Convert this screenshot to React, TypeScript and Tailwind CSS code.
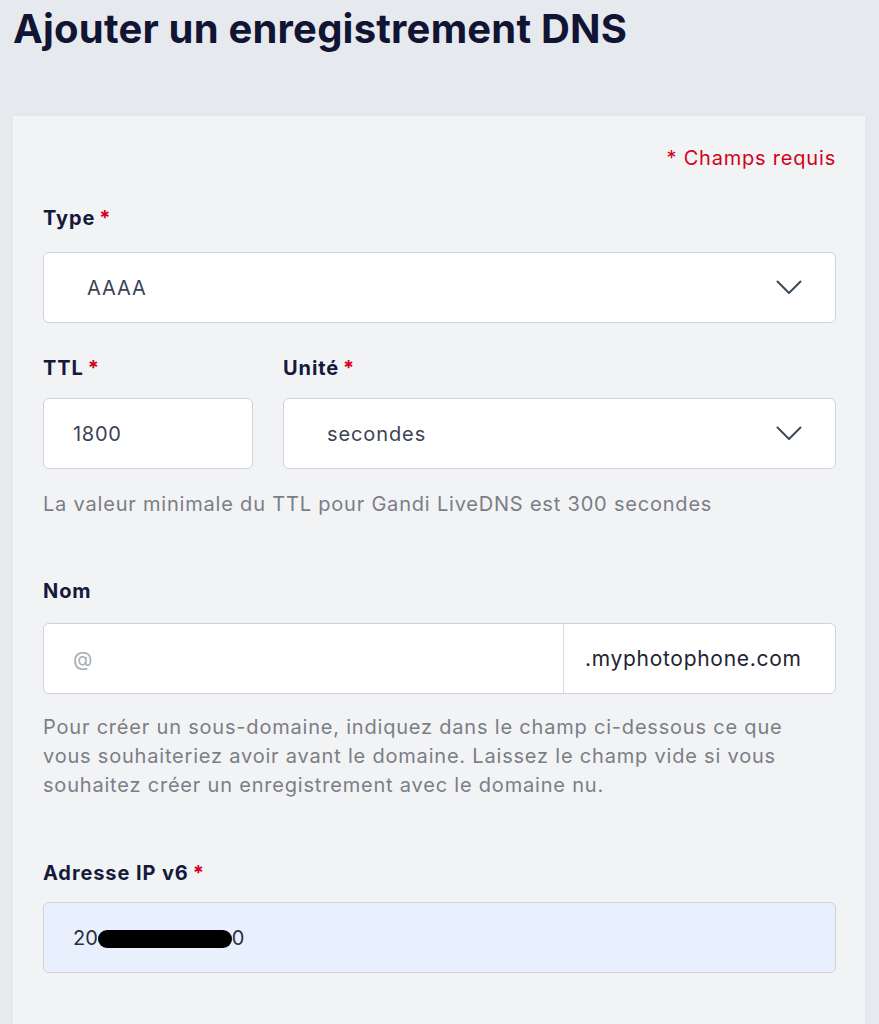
import type { ReactNode } from 'react';

function Chevron() {
  return (
    <svg width="26" height="15" viewBox="0 0 26 15" fill="none" className="shrink-0">
      <polyline points="1.5,1.5 13,13 24.5,1.5" stroke="#3f4a5c" strokeWidth="2" strokeLinecap="round" strokeLinejoin="round" />
    </svg>
  );
}

function Label({ children, required, className }: { children: ReactNode; required?: boolean; className?: string }) {
  return (
    <div className={`text-[20px] leading-[26px] font-bold tracking-[0.9px] text-[#161a3a] ${className ?? ''}`}>
      {children}
      {required && <span className="ml-[4px] text-[#d0021b]">*</span>}
    </div>
  );
}

function Select({ value, className }: { value: string; className?: string }) {
  return (
    <div className={`flex items-center justify-between h-[71px] bg-white border border-[#cfd3d9] rounded-[6px] pl-[43px] pr-[33px] ${className ?? ''}`}>
      <span className="text-[20px] tracking-[0.9px] text-[#3b4354]">{value}</span>
      <Chevron />
    </div>
  );
}

export default function App() {
  return (
    <div className="min-h-[1024px] bg-[#e6e9ed] pt-[5px] overflow-hidden font-['Inter',sans-serif]">
      <h1 className="ml-[13px] text-[40px] leading-[48px] font-bold tracking-[0.2px] text-[#111533]">Ajouter un enregistrement DNS</h1>

      <div className="mt-[62px] ml-[12px] w-[854px] min-h-[920px] bg-[#f2f3f5] border border-[#e9ecef] shadow-[0_0_2px_rgba(0,0,0,0.06)] pl-[30px] pr-[29px] pt-[29px]">
        <div className="text-right text-[20px] leading-[26px] tracking-[0.8px] text-[#d0021b]">* Champs requis</div>

        <Label required className="mt-[34px]">Type</Label>
        <Select value="AAAA" className="mt-[21px]" />

        <div className="mt-[32px] flex gap-[30px]">
          <div className="w-[210px]">
            <Label required>TTL</Label>
            <div className="mt-[17px] h-[71px] flex items-center bg-white border border-[#cfd3d9] rounded-[6px] pl-[29px] text-[20px] tracking-[0.7px] text-[#3b4354]">1800</div>
          </div>
          <div className="flex-1">
            <Label required>Unité</Label>
            <Select value="secondes" className="mt-[17px]" />
          </div>
        </div>

        <p className="mt-[21px] text-[20px] leading-[28px] tracking-[0.8px] text-[#7a7e86]">
          La valeur minimale du TTL pour Gandi LiveDNS est 300 secondes
        </p>

        <Label className="mt-[60px]">Nom</Label>
        <div className="mt-[19px] h-[71px] flex bg-white border border-[#cfd3d9] rounded-[6px]">
          <div className="w-[520px] flex items-center pl-[29px] text-[20px] text-[#a8adb5] border-r border-[#d6d9de]">@</div>
          <div className="flex-1 flex items-center pl-[21px] text-[21px] tracking-[0.7px] text-[#1f2433]">.myphotophone.com</div>
        </div>

        <p className="mt-[19px] pr-[10px] text-[20px] leading-[29px] tracking-[0.8px] text-[#7a7e86]">
          Pour créer un sous-domaine, indiquez dans le champ ci-dessous ce que vous souhaiteriez avoir avant le domaine. Laissez le champ vide si vous souhaitez créer un enregistrement avec le domaine nu.
        </p>

        <Label required className="mt-[60px]">Adresse IP v6</Label>
        <div className="mt-[16px] h-[71px] flex items-center bg-[#e8f0fe] border border-[#cfd3d9] rounded-[6px] pl-[29px] text-[20px] text-[#2a2f3a]">
          <span>20</span>
          <span className="relative inline-block w-[134px] h-[20px]">
            <span className="absolute left-0 top-[2px] w-[134px] h-[18px] bg-black rounded-[9px]" />
          </span>
          <span>0</span>
        </div>
      </div>
    </div>
  );
}
